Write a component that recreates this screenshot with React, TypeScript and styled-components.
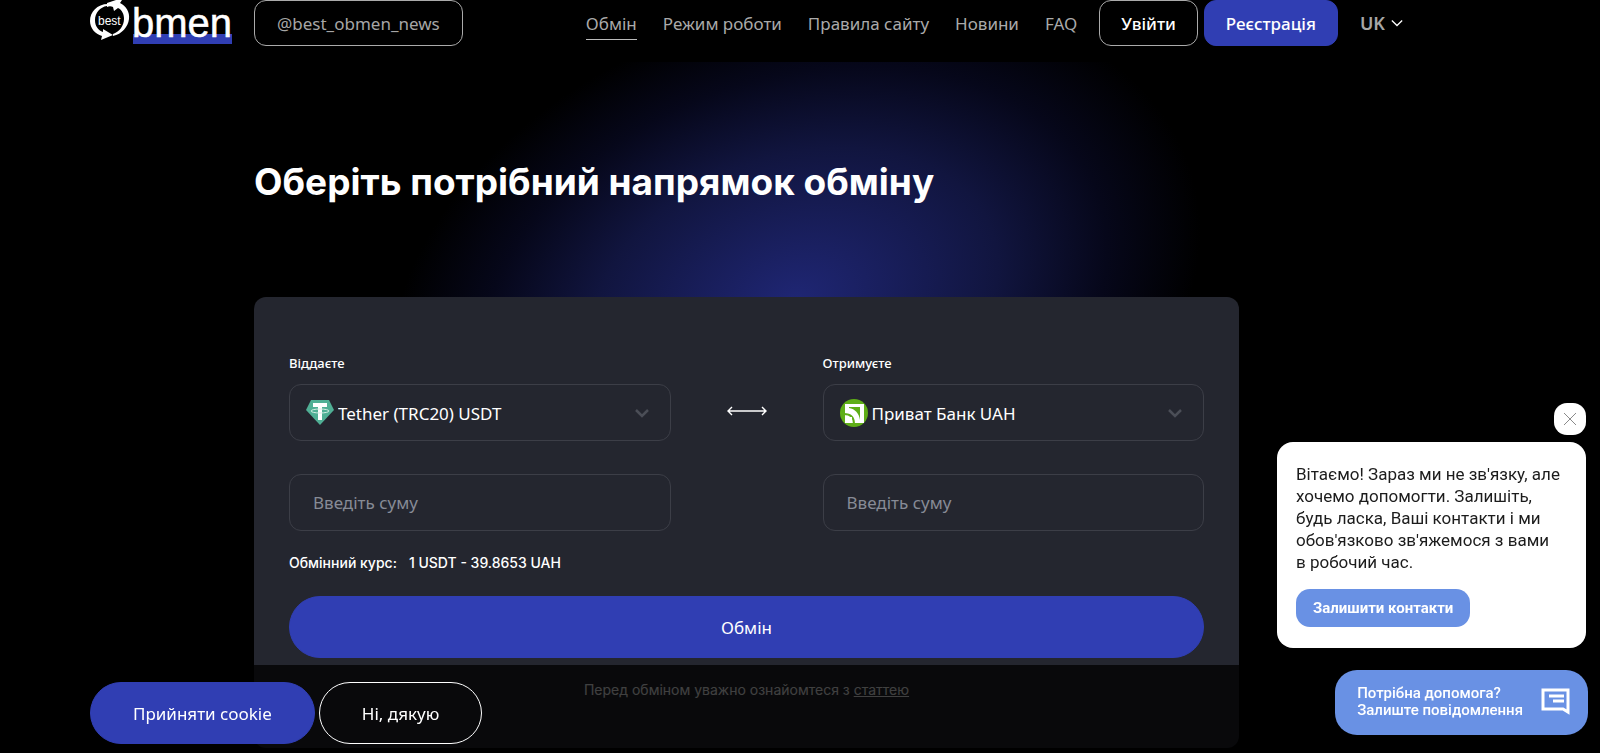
import React from "react";
import styled, { createGlobalStyle, css } from "styled-components";

const ui = `"Noto Sans", "Liberation Sans", sans-serif`;
const inter = `Inter, "Liberation Sans", sans-serif`;
const roboto = `Roboto, "Liberation Sans", sans-serif`;
const blue = "#303eb3";
const sky = "#6991e4";

const GlobalStyle = createGlobalStyle`
  * { box-sizing: border-box; }
  body { margin: 0; background: #000; color: #fff; font-family: ${ui}; }
  button, input, select { font: inherit; }
  button { cursor: pointer; }
`;

const Page = styled.div`
  min-height: 100vh;
  padding-right: 107px;
  overflow: hidden;
`;

const Header = styled.header`
  display: flex;
  align-items: center;
  max-width: 1313px;
  height: 46px;
  margin: 0 auto 16px;
`;

const Logo = styled.a`
  display: block;
  width: 142px;
  height: 46px;
  margin-right: 22px;
`;

const HeaderButton = styled.button<{ $filled?: boolean; $muted?: boolean }>`
  height: 46px;
  padding: 0 ${(p) => (p.$muted ? 22 : 21)}px;
  border: 1px solid ${(p) => (p.$filled ? blue : "#aaa")};
  border-radius: 12px;
  background: ${(p) => (p.$filled ? blue : "transparent")};
  color: ${(p) => (p.$muted ? "#a6a6a6" : "#fff")};
  font-size: 17px;
  font-weight: ${(p) => (p.$muted ? 400 : 500)};
  white-space: nowrap;
`;

const Nav = styled.nav`
  display: flex;
  gap: 26px;
  margin: 0 22px 0 auto;
`;

const NavLink = styled.a<{ $active?: boolean }>`
  padding-top: 3px;
  border-bottom: 1px solid ${(p) => (p.$active ? "#bbb" : "transparent")};
  color: #aaa;
  font-size: 17px;
  line-height: 30px;
  text-decoration: none;
  white-space: nowrap;
`;

const Account = styled.div`
  display: flex;
  gap: 6px;
`;

const Language = styled.button`
  display: flex;
  align-items: center;
  gap: 6px;
  margin-left: 22px;
  padding: 0;
  border: 0;
  background: none;
  color: #a6a6a6;
  font-size: 18px;
  font-weight: 600;
`;

const Hero = styled.main`
  position: relative;
  max-width: 985px;
  margin: 0 auto;
`;

const Glow = styled.svg`
  position: absolute;
  top: 0;
  left: 126px;
  width: 860px;
  height: 260px;
`;

const Title = styled.h1`
  position: relative;
  margin: 0;
  padding: 96px 0 91px;
  font-family: ${inter};
  font-size: 37px;
  font-weight: 700;
  line-height: 48px;
`;

const Card = styled.form`
  position: relative;
  padding: 56px 35px 47px;
  border-radius: 12px;
  background: #24262f;
`;

const Columns = styled.div`
  display: grid;
  grid-template-columns: 1fr 152px 1fr;
`;

const Column = styled.div`
  display: flex;
  flex-direction: column;
`;

const Label = styled.label`
  margin-bottom: 11px;
  font-size: 13px;
  font-weight: 500;
  line-height: 20px;
`;

const SelectBox = styled.div`
  position: relative;
  display: flex;
  align-items: center;
  height: 57px;
  margin-bottom: 33px;
  > svg { position: absolute; pointer-events: none; }
  > svg:first-child { left: 17px; }
  > svg:last-child { right: 22px; }
`;

const field = css`
  width: 100%;
  height: 57px;
  border: 1px solid #3c3e47;
  border-radius: 12px;
  background: transparent;
  color: #fff;
  font-size: 17px;
`;

const Select = styled.select`
  ${field}
  padding: 2px 48px 0;
  appearance: none;
  option { color: #000; }
`;

const Amount = styled.input`
  ${field}
  padding: 0 23px;
  &::placeholder { color: #878b96; opacity: 1; }
`;

const Swap = styled.button`
  align-self: start;
  justify-self: center;
  height: 57px;
  margin-top: 29px;
  padding: 0;
  border: 0;
  background: none;
`;

const Rate = styled.p`
  display: flex;
  gap: 12px;
  margin: 21px 0 23px;
  font-family: ${inter};
  font-size: 14px;
  font-weight: 500;
  line-height: 21px;
`;

const PillButton = styled.button<{ $outline?: boolean; $wide?: boolean }>`
  width: ${(p) => (p.$wide ? "100%" : "auto")};
  height: 62px;
  padding: 0 42px;
  border: 1px solid ${(p) => (p.$outline ? "#fff" : blue)};
  border-radius: 31px;
  background: ${(p) => (p.$outline ? "transparent" : blue)};
  color: #fff;
  font-size: 17px;
`;

const Note = styled.p`
  margin: 21px 0 0;
  font-family: ${inter};
  font-size: 14px;
  line-height: 22px;
  text-align: center;
  a { color: inherit; }
`;

const CookieBar = styled.div`
  position: fixed;
  inset: auto 0 0 0;
  z-index: 1;
  padding: 17px 107px 9px 0;
  background: rgba(0, 0, 0, 0.75);
`;

const CookieActions = styled.div`
  display: flex;
  gap: 4px;
  max-width: 1313px;
  margin: 0 auto;
`;

const Chat = styled.aside`
  position: fixed;
  right: 12px;
  bottom: 18px;
  z-index: 2;
  display: flex;
  flex-direction: column;
  align-items: flex-end;
  font-family: ${roboto};
`;

const CloseButton = styled.button`
  display: grid;
  place-items: center;
  width: 32px;
  height: 32px;
  margin: 0 2px 7px;
  padding: 0;
  border: 0;
  border-radius: 13px;
  background: #fff;
`;

const Bubble = styled.div`
  width: 309px;
  margin: 0 2px 22px;
  padding: 21px 18px 21px 19px;
  border-radius: 16px;
  background: #fff;
  color: #1c1c1c;
  p { margin: 0 0 16px; font-size: 17px; line-height: 22px; }
`;

const ContactButton = styled.button`
  height: 38px;
  padding: 0 17px;
  border: 0;
  border-radius: 14px;
  background: ${sky};
  color: #fff;
  font-size: 15px;
  font-weight: 700;
`;

const HelpButton = styled.button`
  display: flex;
  align-items: center;
  gap: 18px;
  height: 65px;
  padding: 0 17px 2px 22px;
  border: 0;
  border-radius: 22px;
  background: ${sky};
  color: #fff;
  font-size: 15px;
  font-weight: 500;
  line-height: 17px;
  text-align: left;
`;

const Chevron = ({ size, color, width }: { size: number; color: string; width: number }) => (
  <svg width={size} height={size} viewBox="0 0 14 14" fill="none" stroke={color} strokeWidth={width} aria-hidden="true">
    <path d="M1 4l6 6 6-6" />
  </svg>
);

const BrandLogo = () => (
  <svg width="142" height="46" viewBox="0 0 142 46" role="img" aria-label="best Obmen">
    <rect x="43" y="34" width="99" height="10" fill={blue} />
    <path
      fill="#fff"
      d="M18 4C7 4 0 12 0 21c0 7 5 13 12 15l-1 4 12-5-10-6v3C8 30 5 26 5 20 5 13 10 7 17 6z"
    />
    <path
      fill="#fff"
      d="M17 3l9-3h6l-2 3c6 3 10 9 9 16-1 8-7 15-16 17v-2c6-2 11-8 11-15 0-5-2-9-6-11l-4 3-1-4c-2-1-4-1-6 0z"
    />
    <text x="8" y="25" fontSize="12" fontFamily="Liberation Sans, sans-serif" fill="#fff">best</text>
    <text x="42" y="37" fontSize="40" fontFamily="Liberation Sans, sans-serif" fill="#fff" stroke="#fff" strokeWidth="0.5">bmen</text>
  </svg>
);

const TetherIcon = () => (
  <svg width="28" height="25" viewBox="0 0 28 25" aria-hidden="true">
    <path d="M5 0h18l5 10-14 15L0 10z" fill="#50af95" />
    <path d="M7 3h14v4h-5v13h-4V7H7z" fill="#fff" />
    <ellipse cx="14" cy="11" rx="9" ry="2" fill="none" stroke="#d5eee5" />
  </svg>
);

const PrivatIcon = () => (
  <svg width="28" height="28" viewBox="0 0 28 28" aria-hidden="true">
    <circle cx="14" cy="14" r="14" fill="#5fae17" />
    <path d="M5 5h19v19H5z" fill="#fff" />
    <path d="M9 8h11v13C19 14 15 10 9 9z" fill="#5fae17" />
    <path d="M4 15c7 0 10 4 10 10" fill="none" stroke="#5fae17" strokeWidth="2" />
    <path d="M5 18h7v6H5z" fill="#fff" />
  </svg>
);

const links = ["Обмін", "Режим роботи", "Правила сайту", "Новини", "FAQ"];

const directions = [
  { id: "give", label: "Віддаєте", currency: "Tether (TRC20) USDT", Icon: TetherIcon },
  { id: "get", label: "Отримуєте", currency: "Приват Банк UAH", Icon: PrivatIcon },
];

const Direction = ({ id, label, currency, Icon }: (typeof directions)[number]) => (
  <Column>
    <Label htmlFor={id}>{label}</Label>
    <SelectBox>
      <Icon />
      <Select id={id}>
        <option>{currency}</option>
      </Select>
      <Chevron size={14} color="#4b4e57" width={2.5} />
    </SelectBox>
    <Amount placeholder="Введіть суму" aria-label={`${label}: сума`} />
  </Column>
);

export default function App() {
  return (
    <>
      <GlobalStyle />
      <Page>
        <Header>
          <Logo href="#"><BrandLogo /></Logo>
          <HeaderButton $muted>@best_obmen_news</HeaderButton>
          <Nav>
            {links.map((text, i) => (
              <NavLink key={text} href="#" $active={i === 0}>{text}</NavLink>
            ))}
          </Nav>
          <Account>
            <HeaderButton>Увійти</HeaderButton>
            <HeaderButton $filled>Реєстрація</HeaderButton>
          </Account>
          <Language>UK <Chevron size={12} color="#fff" width={1.5} /></Language>
        </Header>
        <Hero>
          <Glow viewBox="0 0 860 260" aria-hidden="true">
            <defs>
              <radialGradient id="glow" gradientUnits="userSpaceOnUse" cx="0" cy="0" r="1" gradientTransform="matrix(395 0 -91 304 415 238)">
                <stop offset="0" stopColor="#1f2674" />
                <stop offset="0.5" stopColor="#11153f" />
                <stop offset="0.77" stopColor="#06071a" />
                <stop offset="1" stopColor="#000" />
              </radialGradient>
            </defs>
            <rect width="860" height="260" fill="url(#glow)" />
          </Glow>
          <Title>Оберіть потрібний напрямок обміну</Title>
          <Card>
            <Columns>
              <Direction {...directions[0]} />
              <Swap type="button" aria-label="Поміняти місцями">
                <svg width="40" height="12" viewBox="0 0 40 12" fill="none" stroke="#fff" strokeWidth="1.4">
                  <path d="M1 6h38M5 2L1 6l4 4M35 2l4 4-4 4" />
                </svg>
              </Swap>
              <Direction {...directions[1]} />
            </Columns>
            <Rate><span>Обмінний курс:</span><span>1 USDT - 39.8653 UAH</span></Rate>
            <PillButton $wide>Обмін</PillButton>
            <Note>Перед обміном уважно ознайомтеся з <a href="#">статтею</a></Note>
          </Card>
        </Hero>
      </Page>
      <CookieBar>
        <CookieActions>
          <PillButton>Прийняти cookie</PillButton>
          <PillButton $outline>Ні, дякую</PillButton>
        </CookieActions>
      </CookieBar>
      <Chat>
        <CloseButton aria-label="Закрити">
          <svg width="12" height="12" viewBox="0 0 12 12" stroke="#8a8a8a"><path d="M0 0l12 12M12 0L0 12" /></svg>
        </CloseButton>
        <Bubble>
          <p>Вітаємо! Зараз ми не зв'язку, але хочемо допомогти. Залишіть, будь ласка, Ваші контакти і ми обов'язково зв'яжемося з вами<br />в робочий час.</p>
          <ContactButton>Залишити контакти</ContactButton>
        </Bubble>
        <HelpButton>
          <span>Потрібна допомога?<br />Залиште повідомлення</span>
          <svg width="30" height="28" viewBox="0 0 30 28" fill="none" stroke="#fff" strokeWidth="3" aria-hidden="true">
            <path d="M2 2h25v22l-5-3H2zM8 8h15M12 13h11" />
          </svg>
        </HelpButton>
      </Chat>
    </>
  );
}
